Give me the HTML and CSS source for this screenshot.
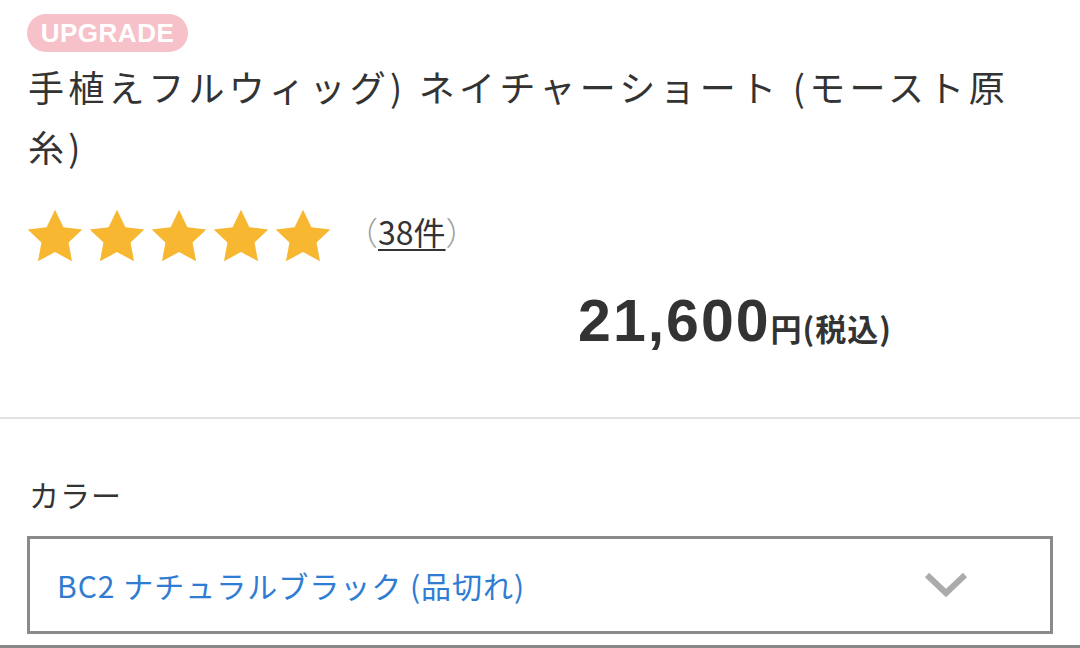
FILE: index.html
```html
<!DOCTYPE html>
<html lang="ja">
<head>
<meta charset="utf-8">
<link rel="stylesheet" href="styles.css">
</head>
<body>
<div class="product">
  <div class="badge">UPGRADE</div>
  <h1 class="title">手植えフルウィッグ) ネイチャーショート (モースト原糸)</h1>
  <div class="rating">
    <div class="stars">
      <svg class="star" viewBox="0 0 24 23"><path d="M12 0.3l3.6 7.4 8.1 1-5.9 5.6 1.5 8-7.3-3.9-7.3 3.9 1.5-8L0.3 8.7l8.1-1z"/></svg>
      <svg class="star" viewBox="0 0 24 23"><path d="M12 0.3l3.6 7.4 8.1 1-5.9 5.6 1.5 8-7.3-3.9-7.3 3.9 1.5-8L0.3 8.7l8.1-1z"/></svg>
      <svg class="star" viewBox="0 0 24 23"><path d="M12 0.3l3.6 7.4 8.1 1-5.9 5.6 1.5 8-7.3-3.9-7.3 3.9 1.5-8L0.3 8.7l8.1-1z"/></svg>
      <svg class="star" viewBox="0 0 24 23"><path d="M12 0.3l3.6 7.4 8.1 1-5.9 5.6 1.5 8-7.3-3.9-7.3 3.9 1.5-8L0.3 8.7l8.1-1z"/></svg>
      <svg class="star" viewBox="0 0 24 23"><path d="M12 0.3l3.6 7.4 8.1 1-5.9 5.6 1.5 8-7.3-3.9-7.3 3.9 1.5-8L0.3 8.7l8.1-1z"/></svg>
    </div>
    <span class="count"><span class="paren">（</span><a class="count-link" href="#">38件</a><span class="paren">）</span></span>
  </div>
  <div class="price-row">
    <span class="price">21,600</span><span class="tax">円(税込)</span>
  </div>
</div>
<div class="options">
  <div class="label">カラー</div>
  <div class="select">
    <span class="select-text">BC2 ナチュラルブラック (品切れ)</span>
    <svg class="chevron" viewBox="0 0 44 26"><path d="M3 3l19 18L41 3"/></svg>
  </div>
</div>
<div class="bottom-line"></div>
</body>
</html>
```
FILE: styles.css
```css
html, body {
  margin: 0;
  padding: 0;
  background: #fff;
}
body {
  width: 1080px;
  height: 648px;
  overflow: hidden;
  font-family: "Noto Sans CJK JP", "Noto Sans", sans-serif;
  color: #333;
}
.product {
  padding: 14px 28px 0 28px;
  border-bottom: 2px solid #e2e2e2;
  height: 419px;
  box-sizing: border-box;
}
.badge {
  display: inline-block;
  margin-left: -1px;
  width: 161px;
  height: 38px;
  line-height: 38px;
  border-radius: 19px;
  background: #f7c1c9;
  color: #fff;
  font-family: "Liberation Sans", Arial, sans-serif;
  font-weight: bold;
  font-size: 26px;
  text-align: center;
  letter-spacing: 0.5px;
}
.title {
  margin: 0;
  margin-top: 4px;
  font-size: 36px;
  font-weight: normal;
  line-height: 60px;
  letter-spacing: 4.3px;
  width: 1010px;
  color: #333;
}
.rating {
  display: flex;
  align-items: center;
  margin-top: 33px;
  margin-left: -1px;
}
.stars {
  display: flex;
  gap: 6px;
}
.star {
  width: 56px;
  height: 54px;
  fill: #f7b731;
}
.count {
  margin-left: 15px;
  font-size: 32px;
  color: #333;
  margin-top: -10px;
}
.paren {
  color: #a0a0a0;
  font-weight: 300;
}
.count-link {
  color: #333;
  text-decoration: underline;
  text-underline-offset: 4px;
  text-decoration-thickness: 2px;
}
.price-row {
  display: flex;
  justify-content: flex-end;
  align-items: baseline;
  padding-right: 160px;
  margin-top: 24px;
}
.price {
  font-family: "Liberation Sans", Arial, sans-serif;
  font-weight: bold;
  font-size: 59px;
  color: #333;
  letter-spacing: 2px;
}
.tax {
  font-weight: bold;
  font-size: 31px;
  letter-spacing: 1px;
  color: #333;
}
.options {
  padding: 55px 27px 0 27px;
}
.label {
  font-size: 30px;
  letter-spacing: 1px;
  color: #333;
  line-height: 40px;
  margin-left: 2px;
}
.select {
  margin-top: 22px;
  height: 98px;
  box-sizing: border-box;
  border: 3px solid #8a8a8a;
  display: flex;
  align-items: center;
  justify-content: space-between;
  padding: 0 82px 0 27px;
}
.select-text {
  font-size: 30px;
  letter-spacing: 1px;
  color: #2f7cd3;
}
.chevron {
  width: 44px;
  height: 26px;
  fill: none;
  stroke: #ababab;
  stroke-width: 6;
}
.bottom-line {
  position: absolute;
  left: 0;
  right: 0;
  top: 645px;
  height: 3px;
  background: #888;
}
```
